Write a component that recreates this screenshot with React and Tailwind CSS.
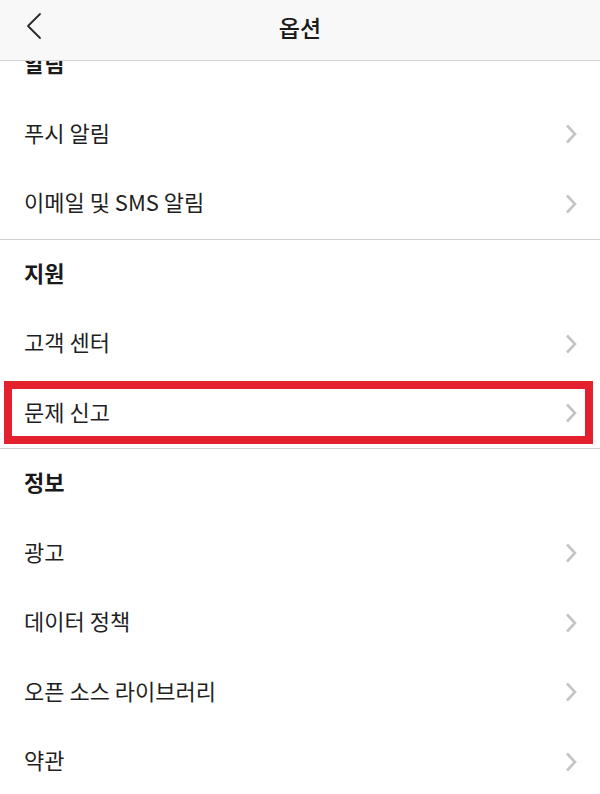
import React from "react";

const Chevron = () => (
  <svg width="14" height="22" viewBox="0 0 14 22" fill="none" className="shrink-0">
    <path d="M3 2.5 L11 11 L3 19.5" stroke="#c4c4c6" strokeWidth="2.6" strokeLinecap="butt" strokeLinejoin="miter" />
  </svg>
);

const Row = ({ label, highlight }) => (
  <div className="relative flex h-[69.5px] items-center justify-between pl-6 pr-[22px]">
    <span className="pb-[4px] text-[22px] text-[#1f1f1f]">{label}</span>
    <Chevron />
    {highlight && (
      <div className="pointer-events-none absolute left-1 right-[7px] top-[2px] bottom-[4px] border-[8px] border-[#e5202e]" />
    )}
  </div>
);

const Section = ({ title }) => (
  <div className="flex h-[69.5px] items-center pl-6">
    <span className="pb-[4px] text-[22px] font-bold text-[#1a1a1a]">{title}</span>
  </div>
);

const Divider = () => <div className="h-px bg-[#d0d0d0]" />;

export default function App() {
  return (
    <div
      className="flex h-[794px] w-[600px] flex-col overflow-hidden bg-white"
      style={{ fontFamily: '"Noto Sans CJK KR", "Noto Sans", sans-serif' }}
    >
      <header className="relative z-10 flex h-[61px] shrink-0 items-center justify-center border-b border-[#d4d4d4] bg-[#f8f8f8]">
        <svg width="18" height="28" viewBox="0 0 18 28" fill="none" className="absolute left-[25px] top-[12px]">
          <path d="M15 2 L3 14 L15 26" stroke="#2a2a2a" strokeWidth="1.8" strokeLinecap="round" strokeLinejoin="round" />
        </svg>
        <span className="pb-[5px] text-[23px] font-medium text-[#1a1a1a]">옵션</span>
      </header>
      <div className="flex-1 overflow-hidden">
        <div className="-mt-[31px]">
          <Section title="알림" />
          <Row label="푸시 알림" />
          <Row label="이메일 및 SMS 알림" />
          <Divider />
          <Section title="지원" />
          <Row label="고객 센터" />
          <Row label="문제 신고" highlight />
          <Divider />
          <Section title="정보" />
          <Row label="광고" />
          <Row label="데이터 정책" />
          <Row label="오픈 소스 라이브러리" />
          <Row label="약관" />
        </div>
      </div>
    </div>
  );
}
